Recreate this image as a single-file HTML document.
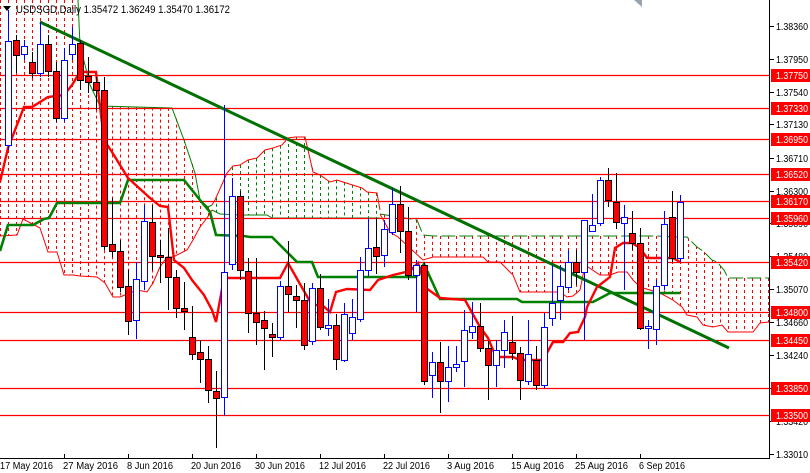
<!DOCTYPE html>
<html><head><meta charset="utf-8">
<style>
html,body{margin:0;padding:0;background:#fff;width:810px;height:473px;overflow:hidden}
svg{display:block;font-family:"Liberation Sans",sans-serif}
</style></head>
<body>
<svg id="c" width="810" height="473" viewBox="0 0 810 473" xmlns="http://www.w3.org/2000/svg">
<rect width="810" height="473" fill="#fff"/>
<g id="cloud"></g>
<g id="hl" stroke="#ff0000" stroke-width="1.2"></g>
<g id="lines" fill="none"></g>
<g id="candles"></g>
<g id="axis"></g>
<text x="16" y="13" font-size="11" fill="#000" textLength="214" lengthAdjust="spacingAndGlyphs">USDSGD,Daily  1.35472 1.36249 1.35470 1.36172</text>
<polygon points="3,6 11,6 7,11" fill="#000"/>
<polygon points="634,0 642,0 642,7" fill="#9aa3ad"/>
</svg>
<script>
var NS="http://www.w3.org/2000/svg";
function el(p,t,a){var e=document.createElementNS(NS,t);for(var k in a)e.setAttribute(k,a[k]);p.appendChild(e);return e;}
function interp(pts,x){if(x<=pts[0][0])return pts[0][1];for(var i=1;i<pts.length;i++){if(x<=pts[i][0]){var a=pts[i-1],b=pts[i];return a[1]+(b[1]-a[1])*(x-a[0])/(b[0]-a[0]);}}return pts[pts.length-1][1];}
function pl(pts){return pts.map(function(p){return p[0]+","+p[1]}).join(" ");}
var cloud=document.getElementById("cloud");
var top1=[[0,0],[78,0],[80,45],[90,85],[100,106],[172,108],[184,140],[195,173],[200,200],[208,207],[212,205]];
var bot1=[[0,236],[17,235],[23,219],[40,228],[48,252],[57,252],[64,275],[73,275],[80,276],[97,277],[105,283],[113,297],[120,297],[137,290],[147,292],[153,283],[160,267],[167,257],[173,257],[187,250],[193,240],[200,227],[207,218],[212,210]];
var topG=[[212,205],[215,200],[227,173],[233,166],[240,165],[248,160],[257,158],[265,150],[273,148],[282,145],[288,138],[295,137],[305,137],[313,172],[320,175],[330,182],[337,180],[343,182],[362,188],[367,192],[377,193],[380,210]];
var botG=[[212,210],[220,214],[240,215],[267,215],[272,218],[380,218]];
var top2=[[380,214],[417,220],[423,235],[433,236],[630,236],[657,236],[673,237],[687,237],[697,247],[703,251],[712,260],[717,262],[724,270],[728,278],[769,278]];
var bot2=[[380,214],[390,232],[398,237],[423,260],[433,257],[483,257],[488,262],[500,262],[513,275],[520,292],[528,292],[560,292],[567,297],[573,296],[580,290],[585,265],[600,275],[610,275],[618,272],[627,272],[633,280],[640,287],[660,293],[673,300],[682,307],[687,315],[697,317],[703,325],[713,327],[722,325],[728,332],[753,332],[760,323],[769,322]];
function verts(top,bot,x0,x1,col){for(var x=x0;x<=x1;x+=8){var a=interp(top,x),b=interp(bot,x);if(Math.abs(b-a)<2)continue;el(cloud,"line",{x1:x+0.5,y1:a,x2:x+0.5,y2:b,stroke:col,"stroke-width":1,"stroke-dasharray":"3,3"});}}
verts(top1,bot1,0,208,"#ff0000");
verts(topG,botG,216,376,"#008000");
verts(top2,bot2,384,768,"#ff0000");
el(cloud,"polyline",{points:pl(top1.slice(1)),fill:"none",stroke:"#008000","stroke-width":1});
el(cloud,"polyline",{points:pl(bot1),fill:"none",stroke:"#ff0000","stroke-width":1});
el(cloud,"polyline",{points:pl(topG),fill:"none",stroke:"#ff0000","stroke-width":1});
el(cloud,"polyline",{points:pl(botG),fill:"none",stroke:"#008000","stroke-width":1});
el(cloud,"polyline",{points:pl(top2),fill:"none",stroke:"#008000","stroke-width":1,"stroke-dasharray":"14,4"});
el(cloud,"polyline",{points:pl(bot2),fill:"none",stroke:"#ff0000","stroke-width":1});
var hl=document.getElementById("hl");
var lv=[["1.37750",75],["1.37330",108],["1.36950",139],["1.36520",174],["1.36170",201],["1.35960",218],["1.35420",262],["1.34800",312],["1.34450",340],["1.33850",388],["1.33500",415]];
lv.forEach(function(l){el(hl,"line",{x1:0,y1:l[1]+0.5,x2:769,y2:l[1]+0.5});});
var lines=document.getElementById("lines");
el(lines,"line",{x1:40,y1:22,x2:729,y2:348,stroke:"#007000","stroke-width":3});
var kijun=[[0,251],[8,225],[33,225],[44,219],[49,218],[57,203],[120,203],[128,180],[184,180],[200,200],[210,212],[216,235],[244,236],[250,237],[272,237],[297,262],[312,262],[318,277],[416,277],[424,264],[440,299],[517,299],[522,302],[593,302],[610,293],[680,293]];
el(lines,"polyline",{points:pl(kijun),stroke:"#008000","stroke-width":2.6});
var tenkan=[[0,182],[8,148],[24,107],[32,107],[48,97],[64,95],[72,85],[80,72],[96,72],[104,140],[112,152],[120,165],[128,178],[150,198],[160,206],[168,207],[174,260],[184,268],[192,280],[204,295],[212,310],[216,322],[220,300],[224,278],[280,278],[288,263],[312,305],[322,305],[330,312],[336,292],[347,289],[370,290],[378,280],[393,275],[410,271],[418,263],[426,288],[440,298],[465,300],[480,327],[488,338],[496,357],[513,357],[520,360],[543,360],[553,342],[563,342],[570,333],[578,332],[585,317],[587,307],[597,287],[610,277],[615,248],[623,243],[632,243],[640,248],[647,258],[673,258],[680,262]];
el(lines,"polyline",{points:pl(tenkan),stroke:"#ff0000","stroke-width":2.4});
var C=[[8,41,145,10,150,1],[16,40,55,35,73,0],[24,46,54,40,60,1],[32,62,73,52,78,0],[40,44,73,22,77,1],[48,44,71,35,77,0],[56,71,118,62,122,0],[64,60,118,48,122,1],[72,44,54,27,60,1],[80,43,80,40,90,0],[88,76,82,57,93,0],[96,82,90,77,110,0],[104,90,246,77,250,0],[112,244,251,198,257,0],[120,251,287,240,292,0],[128,286,321,270,335,0],[136,279,320,262,339,1],[144,221,281,205,290,1],[152,222,256,205,270,0],[160,255,257,240,283,0],[168,257,277,228,310,0],[176,277,308,270,318,0],[184,308,311,282,330,0],[192,337,354,306,360,0],[200,352,359,340,383,0],[208,359,390,346,403,0],[216,391,398,371,448,0],[224,272,397,105,416,1],[232,196,264,178,270,1],[240,196,270,191,280,0],[248,271,313,258,333,0],[256,313,322,258,345,0],[264,320,328,311,370,0],[272,334,337,323,357,0],[280,286,337,281,340,1],[288,286,294,241,312,0],[296,296,300,285,328,0],[304,300,345,283,350,0],[312,288,341,283,345,1],[320,288,327,274,330,0],[328,325,328,299,336,1],[336,325,359,314,370,0],[344,314,360,303,362,1],[352,317,333,299,340,1],[360,270,319,257,322,1],[368,248,270,218,276,1],[376,247,256,218,274,0],[384,229,255,220,267,1],[392,204,232,188,235,1],[400,204,231,186,253,0],[408,231,275,207,280,0],[416,265,275,260,312,1],[424,265,381,262,385,0],[432,362,375,352,398,1],[440,362,381,342,413,0],[448,367,381,346,402,1],[456,364,367,346,372,1],[464,330,361,310,387,1],[472,326,332,302,339,1],[480,326,348,303,352,0],[488,348,365,341,400,0],[496,350,365,340,387,1],[504,332,350,320,368,1],[512,342,353,316,360,0],[520,353,380,347,400,0],[528,354,381,320,385,1],[536,360,385,346,390,0],[544,327,385,313,388,1],[552,303,318,265,326,1],[560,286,300,265,320,1],[568,262,287,250,290,1],[576,262,272,250,285,0],[584,220,272,220,340,1],[592,225,231,194,232,1],[600,180,223,177,226,1],[608,180,200,168,207,0],[616,202,222,173,229,0],[624,217,223,205,290,1],[632,233,243,211,250,0],[640,243,328,228,330,0],[648,326,328,320,349,1],[656,286,329,280,345,1],[664,224,285,211,290,1],[672,217,258,191,262,0],[680,202,258,195,262,1]];
var cg=document.getElementById("candles");
C.forEach(function(c){var x=c[0],bull=c[5];var col=bull?"#0000ff":"#000";
el(cg,"line",{x1:x+0.5,y1:c[3],x2:x+0.5,y2:c[4],stroke:col,"stroke-width":1});
var h=Math.max(c[2]-c[1],1);
el(cg,"rect",{x:x-2.5,y:c[1]+0.5,width:6,height:h,fill:bull?"#fff":"#ff0000",stroke:col,"stroke-width":1});});
var ax=document.getElementById("axis");
el(ax,"line",{x1:769.5,y1:0,x2:769.5,y2:458,stroke:"#000","stroke-width":1});
el(ax,"line",{x1:0,y1:458.5,x2:770,y2:458.5,stroke:"#000","stroke-width":1});
var ticks=[["1.38360",26],["1.37950",59],["1.37540",92],["1.37130",124],["1.36710",158],["1.36300",191],["1.35890",223],["1.35480",256],["1.35070",289],["1.34660",322],["1.34240",355],["1.33830",388],["1.33420",421],["1.33010",454]];
ticks.forEach(function(t){el(ax,"line",{x1:770,y1:t[1]+0.5,x2:774,y2:t[1]+0.5,stroke:"#000"});var tx=el(ax,"text",{x:776,y:t[1]+4,"font-size":"10",fill:"#000",textLength:32,lengthAdjust:"spacingAndGlyphs"});tx.textContent=t[0];});
lv.forEach(function(l){el(ax,"rect",{x:771,y:l[1]-6,width:39,height:13,fill:"#ff0000"});var tx=el(ax,"text",{x:776,y:l[1]+4,"font-size":"10",fill:"#fff",textLength:32,lengthAdjust:"spacingAndGlyphs"});tx.textContent=l[0];});
var dates=[["17 May 2016",0,0,53],["27 May 2016",63,64,55],["8 Jun 2016",127,128,46],["20 Jun 2016",191,192,50],["30 Jun 2016",255,256,50],["12 Jul 2016",319,320,47],["22 Jul 2016",383,384,47],["3 Aug 2016",447,448,47],["15 Aug 2016",511,512,53],["25 Aug 2016",575,576,53],["6 Sep 2016",639,640,46]];
dates.forEach(function(d){if(d[2])el(ax,"line",{x1:d[2]+0.5,y1:454,x2:d[2]+0.5,y2:458,stroke:"#000"});var tx=el(ax,"text",{x:d[1],y:469,"font-size":"10",fill:"#000",textLength:d[3],lengthAdjust:"spacingAndGlyphs"});tx.textContent=d[0];});
</script>
</body></html>
